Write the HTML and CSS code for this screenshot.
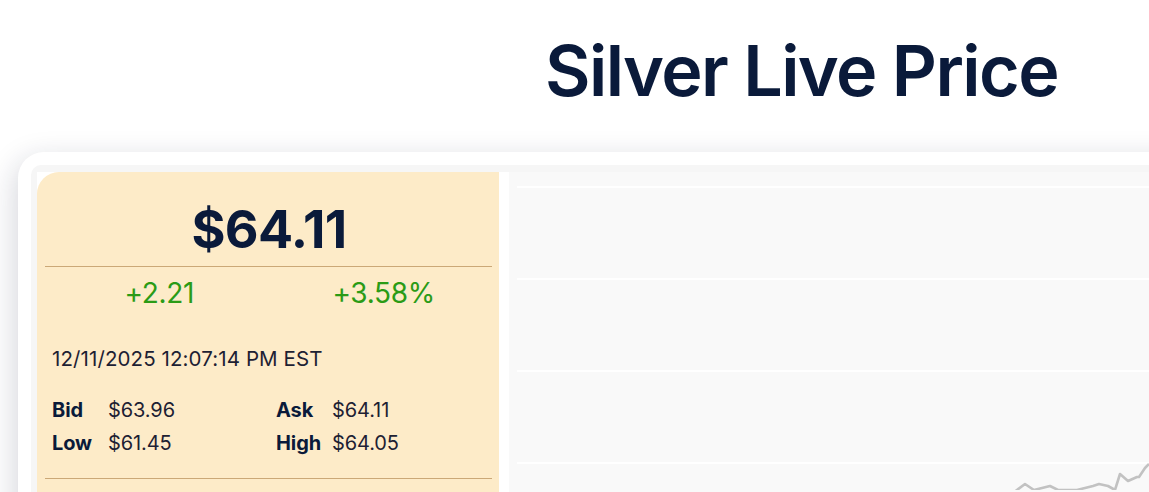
FILE: index.html
```html
<!DOCTYPE html>
<html lang="en">
<head>
<meta charset="utf-8">
<title>Silver Live Price</title>
<link rel="stylesheet" href="styles.css">
</head>
<body>
<main class="page">
  <h1 class="title">Silver Live Price</h1>
  <section class="card">
    <div class="frame">
      <div class="inner">
        <div class="quote">
          <div class="price">$64.11</div>
          <div class="changes">
            <span class="chg">+2.21</span>
            <span class="chg">+3.58%</span>
          </div>
          <div class="stamp">12/11/2025 12:07:14 PM EST</div>
          <div class="stats">
            <span class="lbl">Bid</span><span class="val">$63.96</span>
            <span class="lbl">Ask</span><span class="val">$64.11</span>
            <span class="lbl">Low</span><span class="val">$61.45</span>
            <span class="lbl">High</span><span class="val">$64.05</span>
          </div>
        </div>
        <div class="chart">
          <div class="grid-line"></div>
          <div class="grid-line"></div>
          <div class="grid-line"></div>
          <div class="grid-line"></div>
          <svg class="series" width="640" height="40" viewBox="0 0 640 40">
            <polyline points="500,46 516,34 525,40 541,36 549,40 568,40 584,36 590,34 599,36 606,40 611,24 619,31 628,27 630,27 636,18 640,14" fill="none" stroke="#c2c2c2" stroke-width="2.6" stroke-linejoin="round"/>
          </svg>
        </div>
      </div>
    </div>
  </section>
</main>
</body>
</html>
```

FILE: styles.css
```css
* { box-sizing: border-box; }
html, body { margin: 0; background: #ffffff; overflow: hidden; }
body { font-family: Inter, "Noto Sans", sans-serif; color: #0b1b3b; }

.page { width: 1149px; height: 492px; overflow: hidden; }

.title {
  margin: 29px 0 39px 0;
  padding-left: 545px;
  font-size: 70px;
  line-height: 84px;
  font-weight: 600;
  color: #0a1a3a;
  white-space: nowrap;
  letter-spacing: -1.6px;
}

.card {
  margin-left: 18px;
  width: 1560px;
  padding: 13px;
  background: #ffffff;
  border-radius: 26px;
  box-shadow: -3px 8px 30px rgba(20, 30, 60, 0.18);
}

.frame {
  background: #f6f6f6;
  border-radius: 10px;
  padding: 7px 6px;
}

.inner {
  display: flex;
  gap: 10px;
  background: #ffffff;
  height: 400px;
}

.quote {
  width: 462px;
  flex: none;
  background: #fdebc8;
  border-top-left-radius: 22px;
  padding: 26px 7px 0 8px;
}

.price {
  text-align: center;
  font-size: 52px;
  line-height: 64px;
  font-weight: 700;
  color: #0a1a3a;
  letter-spacing: -0.6px;
  padding-left: 1px;
  padding-bottom: 4px;
  border-bottom: 1px solid #cba877;
}

.changes {
  display: grid;
  grid-template-columns: 1fr 1fr;
  margin-top: 9px;
  font-size: 28px;
  line-height: 34px;
  color: #2b9b16;
  text-align: center;
  letter-spacing: -0.3px;
}
.chg:first-child { padding-left: 5px; }
.chg:last-child { padding-left: 7px; }

.stamp {
  margin: 37px 0 0 7px;
  font-size: 20.5px;
  line-height: 24px;
  color: #1d2133;
  letter-spacing: 0.1px;
}

.stats {
  display: grid;
  grid-template-columns: 56px 168px 56px 1fr;
  margin-top: 23px;
  padding: 0 0 18px 7px;
  font-size: 20px;
  line-height: 33px;
  letter-spacing: -0.1px;
  border-bottom: 1px solid #cba877;
}

.lbl { font-weight: 700; color: #0a1a3a; }
.val { color: #1d2133; }

.chart {
  flex: 1;
  background: #f9f9f9;
  position: relative;
  padding: 14px 0 0 8px;
  display: flex;
  flex-direction: column;
  gap: 90px;
}

.grid-line {
  height: 2px;
  background: #ffffff;
}

.series {
  position: absolute;
  left: 0;
  top: 278px;
}
```
